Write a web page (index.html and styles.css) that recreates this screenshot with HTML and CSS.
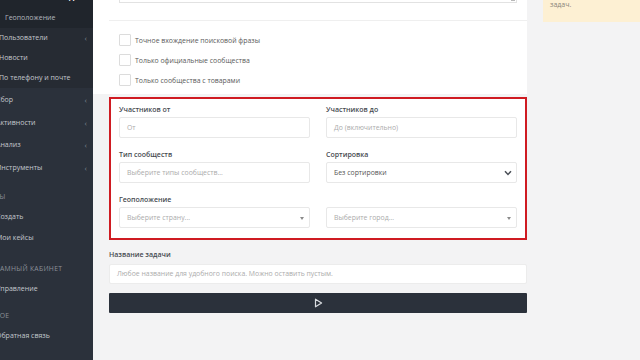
FILE: index.html
```
<!DOCTYPE html>
<html lang="ru">
<head>
    <meta charset="UTF-8">
    <title>Поиск сообществ</title>
    <link rel="stylesheet" href="styles.css">
</head>
<body>
    <nav class="sidebar">
        <div class="sub-top">
            <div class="item cur">Ключевая фраза</div>
            <div class="item sub">Геоположение</div>
        </div>
        <div class="group">
            <div class="item gi has">Пользователи<i>‹</i></div>
            <div class="item gi">Новости</div>
            <div class="item gi">По телефону и почте</div>
        </div>
        <div class="item big has">Сбор<i>‹</i></div>
        <div class="item big has">Активности<i>‹</i></div>
        <div class="item big has">Анализ<i>‹</i></div>
        <div class="item big has">Инструменты<i>‹</i></div>
        <div class="hdr h1">Кейсы</div>
        <div class="item sm">Создать</div>
        <div class="item">Мои кейсы</div>
        <div class="hdr h2">Рекламный кабинет</div>
        <div class="item sm">Управление</div>
        <div class="hdr h3">Другое</div>
        <div class="item sm">Обратная связь</div>
    </nav>

    <main class="main">
        <section class="card">
            <div class="textarea"><span class="grip"></span></div>
            <div class="sep"></div>
            <div class="check"><span class="box"></span>Точное вхождение поисковой фразы</div>
            <div class="check"><span class="box"></span>Только официальные сообщества</div>
            <div class="check"><span class="box"></span>Только сообщества с товарами</div>
        </section>

        <section class="filters">
            <div class="field">
                <div class="label">Участников от</div>
                <div class="input ph">От</div>
            </div>
            <div class="field">
                <div class="label">Участников до</div>
                <div class="input ph">До (включительно)</div>
            </div>
            <div class="field">
                <div class="label">Тип сообществ</div>
                <div class="input ph">Выберите типы сообществ...</div>
            </div>
            <div class="field">
                <div class="label">Сортировка</div>
                <div class="input select">Без сортировки
                    <svg class="chev" width="8" height="6" viewBox="0 0 8 6"><path d="M1 1.2 L4 4.4 L7 1.2" fill="none" stroke="#4a4f57" stroke-width="1.5"/></svg>
                </div>
            </div>
            <div class="field">
                <div class="label">Геоположение</div>
                <div class="input ph select">Выберите страну...<span class="caret"></span></div>
            </div>
            <div class="field">
                <div class="label">&nbsp;</div>
                <div class="input ph select">Выберите город...<span class="caret"></span></div>
            </div>
        </section>

        <div class="label name">Название задачи</div>
        <div class="input wide ph">Любое название для удобного поиска. Можно оставить пустым.</div>
        <button class="run">
            <svg width="9" height="10" viewBox="0 0 9 10"><path d="M1.5 1.2 L7.6 5 L1.5 8.8 Z" fill="none" stroke="#d9dce0" stroke-width="1.2" stroke-linejoin="round"/></svg>
        </button>
    </main>

    <aside class="aside">
        <div class="note">задач.</div>
    </aside>
</body>
</html>
```

FILE: styles.css
```
* { margin: 0; padding: 0; box-sizing: border-box; }
body { display: flex; width: 640px; height: 360px; overflow: hidden; background: #f3f3f4; font-family: "Open Sans", "Noto Sans", sans-serif; }

.sidebar { width: 93px; flex: none; height: 360px; overflow: hidden; background: #2b313b; color: #c4c8ce; font-size: 7px; }
.sidebar .sub-top { margin-top: -13px; background: #20252c; }
.sidebar .group { background: #262b33; }
.item { position: relative; height: 22px; line-height: 22px; white-space: nowrap; text-indent: -4px; }
.item.cur { height: 21px; line-height: 20px; color: #fff; font-weight: 700; text-indent: 28px; }
.item.sub { height: 20px; line-height: 20px; text-indent: 5px; color: #b3b8bf; }
.item.gi { height: 20px; line-height: 20px; text-indent: -1px; }
.item.big { height: 22.5px; line-height: 23px; }
.item.sm { height: 20px; line-height: 20px; text-indent: -4px; }
.item i { position: absolute; right: 6px; top: 0; font-style: normal; color: #7d838c; font-size: 8px; text-indent: 0; }
.hdr { height: 20px; line-height: 20px; white-space: nowrap; text-transform: uppercase; color: #8b9098; font-size: 6.8px; letter-spacing: 0.3px; }
.hdr.h1 { margin-top: 9px; text-indent: -19px; }
.hdr.h2 { margin-top: 10px; text-indent: -18px; }
.hdr.h3 { margin-top: 7px; text-indent: -18px; }

.main { width: 434px; flex: none; padding-left: 16px; }
.card { background: #fff; margin-left: -16px; padding: 0 0 4px 16px; }
.textarea { position: relative; height: 3px; margin: 0 10px; border: 1px solid #e2e2e2; border-top: 0; }
.grip { position: absolute; right: 1px; bottom: 1px; width: 4px; height: 4px; border-right: 1px solid #b8b8b8; border-bottom: 1px solid #b8b8b8; }
.sep { height: 1px; margin: 17px 0 9px; background: #efefef; }
.check { display: flex; align-items: center; height: 20px; padding-left: 10px; font-size: 6.9px; color: #5a5a5a; }
.check .box { width: 12px; height: 12px; margin-right: 4px; border: 1px solid #dcdcdc; border-radius: 1px; background: #fff; }

.filters { display: grid; grid-template-columns: 1fr 1fr; column-gap: 16px; row-gap: 12px; margin-top: 3px; padding: 6px 8px 10px; border: 2px solid #cf1b22; background: #fff; }
.label { height: 10px; line-height: 10px; margin-bottom: 2px; font-size: 7px; font-weight: 600; color: #464a50; }
.input { position: relative; height: 21px; line-height: 19px; padding: 0 7px; border: 1px solid #e8e8e8; border-radius: 2px; background: #fff; font-size: 6.9px; color: #555; white-space: nowrap; }
.input.ph { color: #ababab; }
.chev { position: absolute; right: 4px; top: 7px; }
.caret { position: absolute; right: 5px; top: 9px; border-left: 2.5px solid transparent; border-right: 2.5px solid transparent; border-top: 3px solid #8a8a8a; }

.label.name { margin-top: 10px; margin-bottom: 4px; }
.input.wide { height: 20px; line-height: 18px; border-color: #ececec; }
.run { display: flex; align-items: center; justify-content: center; width: 418px; height: 20px; margin-top: 9px; border: 0; border-radius: 1px; background: #2b313b; cursor: pointer; }

.aside { flex: 1; padding-left: 16px; }
.note { height: 22px; padding-left: 7px; line-height: 10px; background: #fdf0d3; font-size: 7px; color: #8a857a; }
```
